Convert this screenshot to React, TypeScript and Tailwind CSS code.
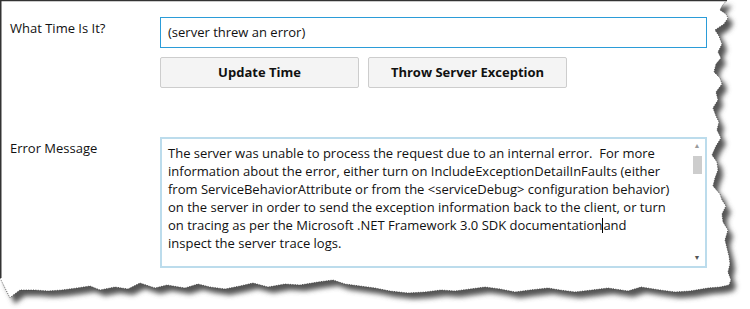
import React from 'react'

// torn right edge, top to bottom
const rightEdge: [number, number][] = [
  [727, 0], [722, 6], [720, 10], [726, 14], [728, 18], [724, 24], [715, 30], [719, 36],
  [722, 44], [718, 52], [721, 58], [716, 64], [714, 72], [720, 78], [722, 84], [716, 92],
  [718, 100], [713, 108], [716, 116], [719, 122], [717, 130], [721, 138], [716, 146],
  [712, 155], [717, 162], [718, 170], [715, 178], [713, 186], [720, 194], [722, 200],
  [726, 206], [722, 214], [723, 222], [728, 230], [725, 240], [727, 248], [729, 256],
  [730, 264], [728, 272], [731, 280], [729, 285],
]

// torn bottom edge, right to left
const bottomEdge: [number, number][] = [
  [720, 287], [708, 288], [690, 291], [675, 292], [660, 290], [641, 287], [628, 291],
  [608, 288], [592, 290], [575, 292], [560, 290], [548, 288], [530, 290], [515, 292],
  [500, 289], [485, 287], [470, 289], [455, 291], [441, 290], [425, 292], [408, 293],
  [390, 291], [375, 288], [360, 286], [345, 284], [333, 280], [318, 282], [300, 285],
  [285, 284], [268, 287], [253, 283], [240, 286], [225, 289], [210, 287], [198, 284],
  [185, 288], [167, 285], [155, 288], [140, 283], [128, 289], [115, 287], [100, 290],
  [90, 286], [77, 288], [62, 290], [48, 291], [35, 290], [20, 290], [12, 296], [10, 298],
  [5, 288], [0, 278],
]

const jagged = [...rightEdge, ...bottomEdge]
const paperPath = 'M0,0 ' + jagged.map(([x, y]) => `L${x},${y}`).join(' ') + ' Z'
const edgeLine = 'M' + jagged.map(([x, y]) => `${x},${y}`).join(' L')

function TornPaper() {
  return (
    <svg className="absolute inset-0" width="750" height="309" viewBox="0 0 750 309">
      <defs>
        <filter id="tear-shadow" x="-5%" y="-5%" width="110%" height="120%">
          <feGaussianBlur stdDeviation="2.4" />
        </filter>
      </defs>
      <path d={paperPath} transform="translate(5 6)" fill="#555555" filter="url(#tear-shadow)" />
      <path d={paperPath} fill="#ffffff" />
      <path d="M727,0.5 L0.75,0.5 L0.75,278" fill="none" stroke="#333333" strokeWidth="1.5" />
      <path d={edgeLine} fill="none" stroke="#3a3a3a" strokeWidth="0.8" strokeDasharray="1 1.4" />
    </svg>
  )
}

const textLines = [
  'The server was unable to process the request due to an internal error.  For more',
  'information about the error, either turn on IncludeExceptionDetailInFaults (either',
  'from ServiceBehaviorAttribute or from the <serviceDebug> configuration behavior)',
  'on the server in order to send the exception information back to the client, or turn',
]

export default function App() {
  return (
    <div
      className="relative w-[750px] h-[309px] overflow-hidden bg-white text-[#111111]"
      style={{ fontFamily: '"Open Sans", "Noto Sans", sans-serif' }}
    >
      <TornPaper />

      <div className="relative flex flex-col pt-[17px] pl-[10px] text-[13px]">
        <div className="flex">
          <div className="w-[150px] pt-[3px] leading-[17px]">What Time Is It?</div>
          <div className="flex flex-col gap-[9px] w-[547px]">
            <div className="h-[31px] border border-[#2b9cd8] flex items-center px-[7px]">
              (server threw an error)
            </div>
            <div className="flex gap-[9px]">
              <button className="w-[199px] h-[31px] rounded-[2px] border border-[#cdcdcd] bg-[#f4f4f4] font-bold">
                Update Time
              </button>
              <button className="w-[199px] h-[31px] rounded-[2px] border border-[#cdcdcd] bg-[#f4f4f4] font-bold">
                Throw Server Exception
              </button>
            </div>
          </div>
        </div>

        <div className="flex mt-[49px]">
          <div className="w-[150px] pt-[3px] leading-[17px]">Error Message</div>
          <div className="w-[547px] h-[131px] border-2 border-[#bcdcec] flex">
            <div className="flex-1 pl-[6px] pt-[5px] leading-[18px] whitespace-pre">
              {textLines.map((line) => (
                <div key={line}>{line}</div>
              ))}
              <div>
                on tracing as per the Microsoft .NET Framework 3.0 SDK documentation
                <span className="inline-block w-px h-[15px] bg-black align-[-3px]" />
                and
              </div>
              <div>inspect the server trace logs.</div>
            </div>
            <div className="w-[14px] flex flex-col items-center pt-[2px] pb-[4px] mr-[1px]">
              <span className="text-[7px] leading-[9px] text-[#9a9a9a]">▲</span>
              <div className="w-[9px] h-[18px] bg-[#cdcdcd] mt-[6px]" />
              <div className="flex-1" />
              <span className="text-[7px] leading-[9px] text-[#555]">▼</span>
            </div>
          </div>
        </div>
      </div>
    </div>
  )
}
